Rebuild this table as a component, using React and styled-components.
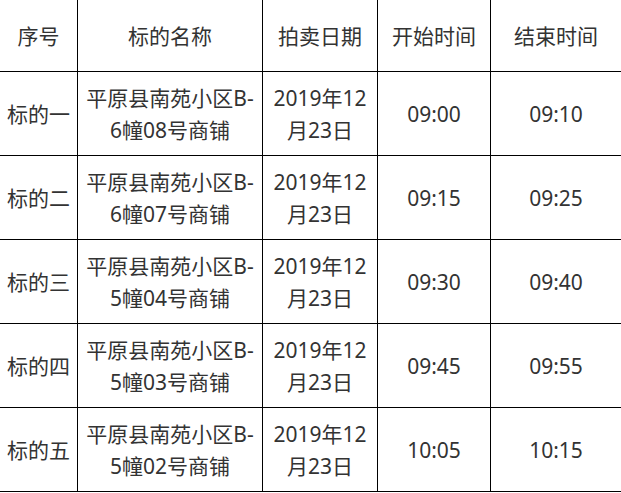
import React from "react";
import styled, { createGlobalStyle } from "styled-components";

const GlobalStyle = createGlobalStyle`
  html, body { margin: 0; padding: 0; background: #fff; overflow: hidden; }
  body { font-family: "Noto Sans", "Noto Sans CJK SC", sans-serif; }
`;

const Table = styled.table`
  border-collapse: collapse;
  table-layout: fixed;
  width: 623px;
  margin: -1px 0 0 -1px;
  color: #333;
  font-size: 21px;
  line-height: 32px;
`;

const Cell = styled.td`
  border: 1px solid #000;
  padding: 0;
  font-weight: normal;
  text-align: center;
  vertical-align: middle;
  white-space: nowrap;
`;

const HeadCell = styled(Cell).attrs({ as: "th" })``;

const HeadRow = styled.tr`
  height: 72px;
`;

const BodyRow = styled.tr`
  height: 84px;
`;

const Line = styled.span`
  display: block;
`;

const cols = [78, 185, 115, 113, 131];
const headers = ["序号", "标的名称", "拍卖日期", "开始时间", "结束时间"];

const rows = [
  { no: "标的一", name: ["平原县南苑小区B-", "6幢08号商铺"], start: "09:00", end: "09:10" },
  { no: "标的二", name: ["平原县南苑小区B-", "6幢07号商铺"], start: "09:15", end: "09:25" },
  { no: "标的三", name: ["平原县南苑小区B-", "5幢04号商铺"], start: "09:30", end: "09:40" },
  { no: "标的四", name: ["平原县南苑小区B-", "5幢03号商铺"], start: "09:45", end: "09:55" },
  { no: "标的五", name: ["平原县南苑小区B-", "5幢02号商铺"], start: "10:05", end: "10:15" },
];

const date = ["2019年12", "月23日"];

export default function App() {
  return (
    <>
      <GlobalStyle />
      <Table>
        <colgroup>
          {cols.map((w, i) => (
            <col key={i} style={{ width: w }} />
          ))}
        </colgroup>
        <thead>
          <HeadRow>
            {headers.map((h) => (
              <HeadCell key={h}>{h}</HeadCell>
            ))}
          </HeadRow>
        </thead>
        <tbody>
          {rows.map((r) => (
            <BodyRow key={r.no}>
              <Cell>{r.no}</Cell>
              <Cell>
                {r.name.map((l) => (
                  <Line key={l}>{l}</Line>
                ))}
              </Cell>
              <Cell>
                {date.map((l) => (
                  <Line key={l}>{l}</Line>
                ))}
              </Cell>
              <Cell>{r.start}</Cell>
              <Cell>{r.end}</Cell>
            </BodyRow>
          ))}
        </tbody>
      </Table>
    </>
  );
}
